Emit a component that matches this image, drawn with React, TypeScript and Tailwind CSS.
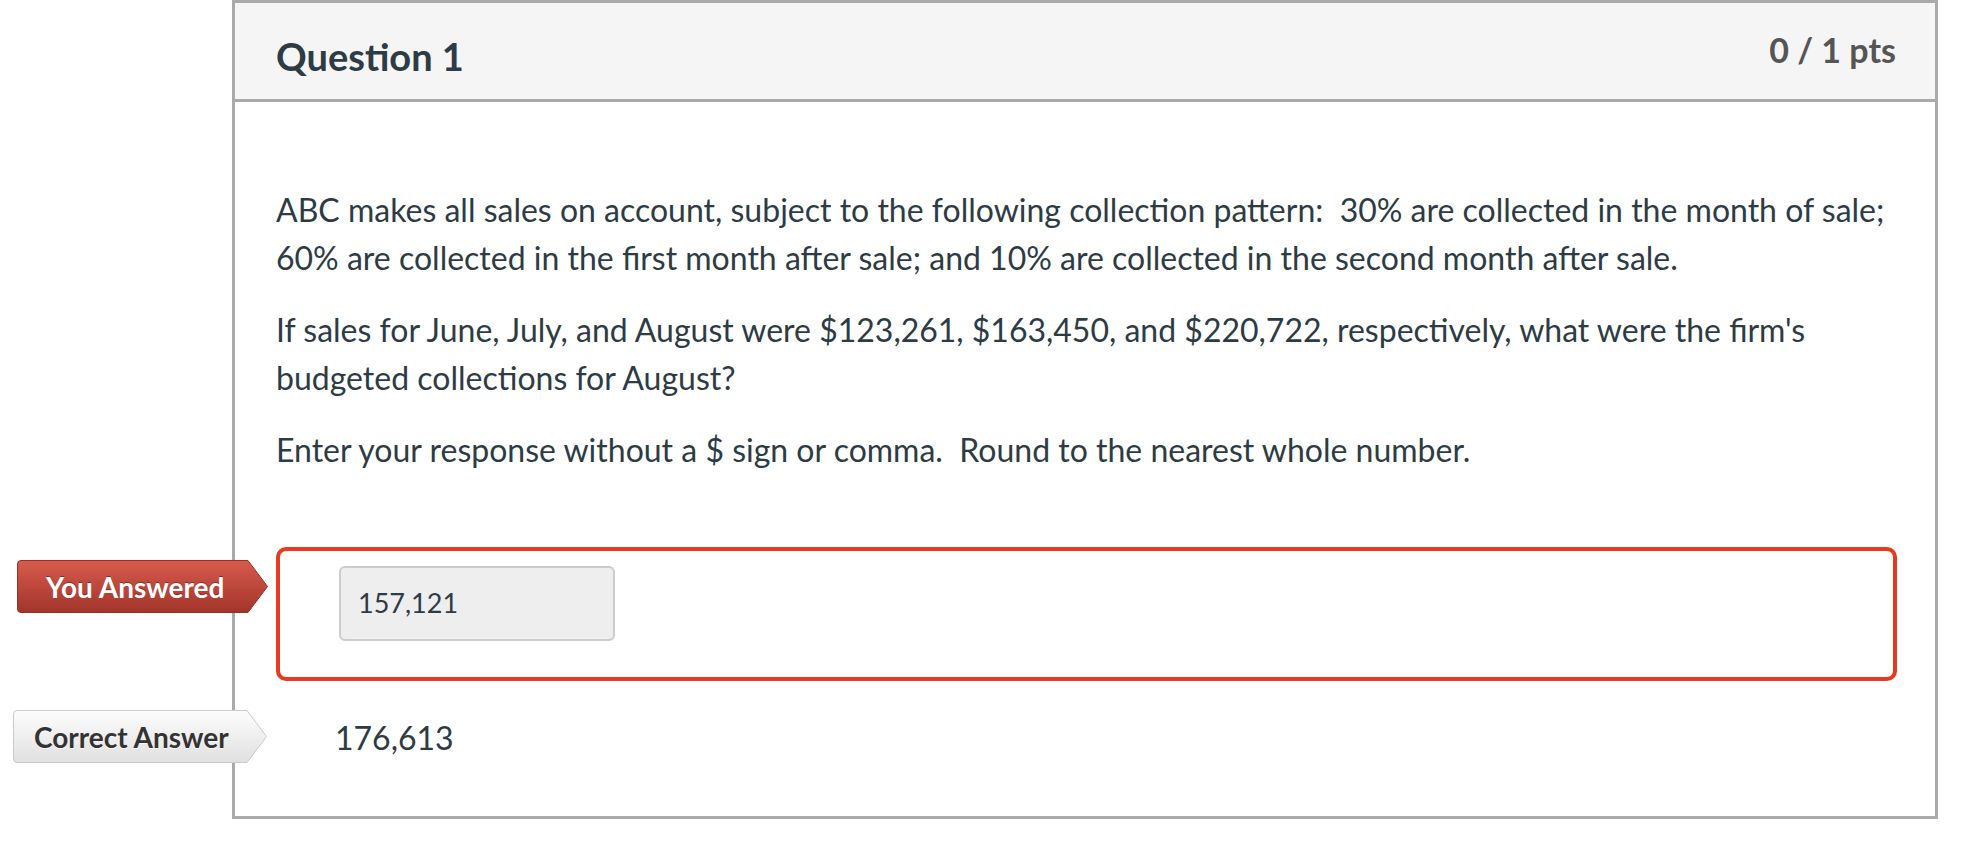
import React from "react";

type BadgeProps = {
  label: string;
  variant: "wrong" | "correct";
  width: number;
};

// arrow shaped label that sits over the left edge of the card
const AnswerBadge = ({ label, variant, width }: BadgeProps) => {
  const h = 53;
  const tip = 20;
  const id = `grad-${variant}`;
  const isWrong = variant === "wrong";
  return (
    <div className="relative flex items-center h-[53px]" style={{ width }}>
      <svg className="absolute inset-0" width={width} height={h} viewBox={`0 0 ${width} ${h}`}>
        <defs>
          <linearGradient id={id} x1="0" y1="0" x2="0" y2="1">
            <stop offset="0" stopColor={isWrong ? "#d75b4d" : "#fdfdfd"} />
            <stop offset="1" stopColor={isWrong ? "#a3342a" : "#e0e0e0"} />
          </linearGradient>
        </defs>
        <path
          d={`M4 0.5 H${width - tip} L${width - 0.5} ${h / 2} L${width - tip} ${h - 0.5} H4 Q0.5 ${h - 0.5} 0.5 ${h - 4} V4 Q0.5 0.5 4 0.5 Z`}
          fill={`url(#${id})`}
          stroke={isWrong ? "#97302a" : "#c9c9c9"}
          strokeWidth="1"
        />
      </svg>
      <span
        className={
          isWrong
            ? "relative pl-[29px] text-[28px] font-bold text-white [text-shadow:0_-1px_0_rgba(0,0,0,0.35)]"
            : "relative pl-[21px] text-[28px] font-bold text-[#333333] [text-shadow:0_1px_0_rgba(255,255,255,0.8)]"
        }
      >
        {label}
      </span>
    </div>
  );
};

const App = () => {
  return (
    <div className="w-full min-h-[852px] bg-white font-[Lato,sans-serif] text-[#2d3b45]">
      <div className="ml-[232px] w-[1706px] border-[3px] border-[#aaaaaa]">
        {/* HEADER */}
        <div className="flex justify-between items-start h-[99px] bg-[#f5f5f5] border-b-[3px] border-[#aaaaaa] pl-[41px] pr-[39px] pt-[30px]">
          <h2 className="text-[38px] leading-[46px] font-bold">Question 1</h2>
          <div className="text-[34px] leading-[40px] font-bold text-[#555555] -mt-[3px]">
            0 / 1 pts
          </div>
        </div>

        {/* BODY */}
        <div className="pl-[41px] pr-[38px] pt-[84px] pb-[48px]">
          <div className="text-[32px] leading-[48px]">
            <p className="mb-[24px]">
              ABC makes all sales on account, subject to the following collection pattern:&nbsp; 30% are collected in
              the month of sale; 60% are collected in the first month after sale; and 10% are collected in the second
              month after sale.
            </p>
            <p className="mb-[24px]">
              If sales for June, July, and August were $123,261, $163,450, and $220,722, respectively, what were the
              firm's budgeted collections for August?
            </p>
            <p>Enter your response without a $ sign or comma.&nbsp; Round to the nearest whole number.</p>
          </div>

          {/* YOU ANSWERED */}
          <div className="relative mt-[73px]">
            <div className="absolute left-[-259px] top-[13px]">
              <AnswerBadge label="You Answered" variant="wrong" width={251} />
            </div>
            <div className="border-[4px] border-[#e73a1f] rounded-[10px] pl-[59px] pt-[15px] pb-[36px]">
              <div className="w-[276px] h-[75px] flex items-center bg-[#eeeeee] border-2 border-[#cccccc] rounded-[6px] pl-[17px] text-[27px]">
                157,121
              </div>
            </div>
          </div>

          {/* CORRECT ANSWER */}
          <div className="relative mt-[27px] h-[60px] flex items-center pl-[59px]">
            <div className="absolute left-[-263px] top-[2px]">
              <AnswerBadge label="Correct Answer" variant="correct" width={254} />
            </div>
            <span className="text-[32px]">176,613</span>
          </div>
        </div>
      </div>
    </div>
  );
};

export default App;
